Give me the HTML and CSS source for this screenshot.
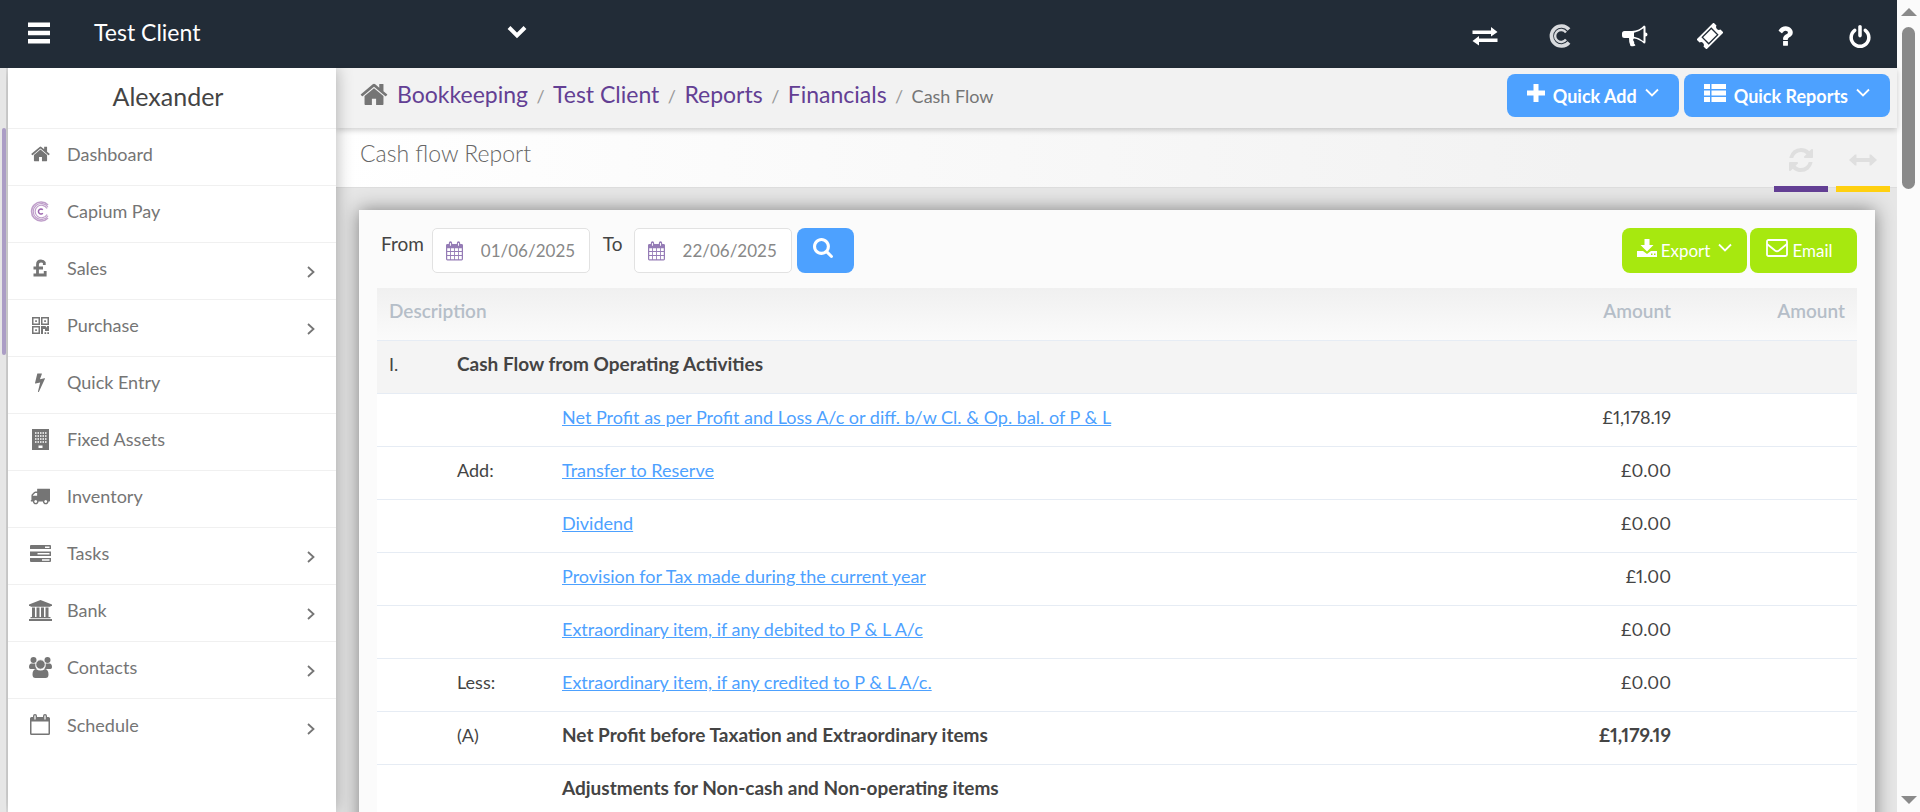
FILE: index.html
```
<!DOCTYPE html>
<html lang="en">
<head>
<meta charset="utf-8">
<title>Cash flow Report</title>
<link rel="stylesheet" href="styles.css">
</head>
<body>
<svg class="defs" aria-hidden="true">
  <symbol id="home" viewBox="64 200 1664 1400"><path d="M1472 992v480q0 26-19 45t-45 19h-384v-384h-256v384h-384q-26 0-45-19t-19-45v-480q0-1 .5-3t.5-3l575-474 575 474q1 2 1 6zm223-69l-62 74q-8 9-21 11h-3q-13 0-21-7l-692-577-692 577q-12 8-24 7-13-2-21-11l-62-74q-8-10-7-23.5t11-21.5l719-599q32-26 76-26t76 26l244 204v-195q0-14 9-23t23-9h192q14 0 23 9t9 23v408l219 182q10 8 11 21.5t-7 23.5z"/></symbol>
  <symbol id="right" viewBox="0 0 8 12"><path d="M1 1l5.500 5L1 11" fill="none" stroke="currentColor" stroke-width="1.800"/></symbol>
  <symbol id="down" viewBox="0 0 14 9"><path d="M1 1.500l6 6 6-6" fill="none" stroke="currentColor" stroke-width="1.800"/></symbol>
  <symbol id="calendar" viewBox="0 0 18 20"><path fill-rule="evenodd" d="M1.500 2.500H3V1.500a1.500 1.500 0 0 1 3.500 0v1h5v-1a1.500 1.500 0 0 1 3.500 0v1h1.500A1.500 1.500 0 0 1 18 4v14.500a1.500 1.500 0 0 1-1.500 1.500h-15A1.500 1.500 0 0 1 0 18.500V4a1.500 1.500 0 0 1 1.500-1.500zM4.200 1.500v3h1v-3zM12.700 1.500v3h1v-3zM1.300 7v3h3V7zM5.200 7v3h3.300V7zM9.400 7v3h3.300V7zM13.600 7v3h3.100V7zM1.300 11v3.200h3V11zM5.200 11v3.200h3.300V11zM9.400 11v3.200h3.300V11zM13.600 11v3.200h3.100V11zM1.300 15.200v3.500h3v-3.500zM5.200 15.200v3.500h3.300v-3.500zM9.400 15.200v3.500h3.300v-3.500zM13.600 15.200v3.500h3.100v-3.500z"/></symbol>
</svg>
<div class="app">
  <div class="page">
    <header class="topbar">
      <button class="plain menu" aria-label="Menu"><svg width="20" height="20" viewBox="0 0 20 20"><path d="M0 .500h20v4H0zM0 8h20v4H0zM0 15.500h20v4H0z"/></svg></button>
      <button class="plain client"><span>Test Client</span><svg width="20" height="14" viewBox="0 0 20 14"><path d="M2 2.500l8 8 8-8" fill="none" stroke="currentColor" stroke-width="4"/></svg></button>
      <nav class="tools" aria-label="Tools">
        <a href="#" aria-label="Switch"><svg width="26" height="20" viewBox="0 0 26 20"><path d="M.500 4.500H19V1l6.500 5-6.500 4.500V8H.500zM25.500 12.500H7V10L.500 15 7 19.500v-3.500h18.500z"/></svg></a>
        <a href="#" aria-label="Capium"><svg width="22" height="24" viewBox="0 0 22 24"><g fill="none" stroke="#d8dadd"><path d="M20 5.500A10 10 0 1 0 20 18.500" stroke-width="3.600"/><path d="M17 8.500A6 6 0 1 0 17 15.500" stroke-width="2.400"/></g></svg></a>
        <a href="#" aria-label="News"><svg width="26" height="22" viewBox="0 0 26 22"><path fill-rule="evenodd" d="M2.500 6H10C15 6 19 3.500 22 .500q1.500 0 1.500 1.500v5.500a2 2 0 0 1 0 4V17q0 1.500-1.500 1.500-4.500-4.200-10-5-1.800 1 .200 3.500-.800 1.500 1.300 3.300-1.500 1.700-5 .700-1.700-4-1.500-8H2.500Q0 13 0 10.500V8.500Q0 6 2.500 6zM21.500 3.300Q17 7 12 7.700v4q5 .600 9.500 4.500z"/></svg></a>
        <a href="#" aria-label="Tickets"><svg width="26" height="26" viewBox="0 0 26 26"><g transform="rotate(-45 13 13)"><path fill-rule="evenodd" d="M1 6h24v4.200a2.900 2.900 0 0 0 0 5.600V20H1v-4.200a2.900 2.900 0 0 0 0-5.600zM6 7.800h14v10.400H6z"/><path d="M7.300 9.100h11.400v7.800H7.300z"/></g></svg></a>
        <a href="#" aria-label="Help"><svg width="16" height="20" viewBox="370 240 1050 1310"><path d="M1088 1256v240q0 16-12 28t-28 12h-240q-16 0-28-12t-12-28v-240q0-16 12-28t28-12h240q16 0 28 12t12 28zm316-600q0 54-15.500 101t-35 76.500-55 59.500-57.500 43.500-61 35.500q-41 23-68.500 65t-27.500 67q0 17-12 32.500t-28 15.500h-240q-15 0-25.500-18.500t-10.500-37.500v-45q0-83 65-156.500t143-108.500q59-27 84-56t25-76q0-42-46.500-74t-107.500-32q-65 0-108 29-35 25-107 115-13 16-31 16-12 0-25-8l-164-125q-13-10-15.500-25t5.500-28q160-266 464-266 80 0 161 31t146 83 106 127.500 41 158.500z"/></svg></a>
        <a href="#" aria-label="Log out"><svg width="22" height="23" viewBox="128 0 1536 1664"><path d="M1664 896q0 156-61 298t-164 245-245 164-298 61-298-61-245-164-164-245-61-298q0-182 80.500-343t226.500-270q43-32 95.500-25t83.500 50q32 42 24.500 94.500t-49.500 84.500q-98 74-151.500 181t-53.500 228q0 104 40.500 198.500t109.500 163.500 163.500 109.500 198.500 40.500 198.500-40.500 163.500-109.500 109.500-163.500 40.500-198.500q0-121-53.500-228t-151.500-181q-42-32-49.500-84.500t24.500-94.500q31-43 84-50t95 25q146 109 226.500 270t80.500 343zm-640-768v640q0 52-38 90t-90 38-90-38-38-90v-640q0-52 38-90t90-38 90 38 38 90z"/></svg></a>
      </nav>
    </header>
    <div class="body">
      <div class="rail"><div class="rail-thumb"></div></div>
      <aside class="sidebar">
        <h2 class="user">Alexander</h2>
        <nav aria-label="Main">
          <a class="item" href="#"><svg width="19" height="16"><use href="#home"/></svg><span>Dashboard</span></a>
          <a class="item" href="#"><svg width="21" height="21" viewBox="0 0 21 21"><g fill="none" stroke="#bf9fca"><path d="M18 4A9.500 9.500 0 1 0 18 17" stroke-width="1.600"/><path d="M18 6.200A8 8 0 1 0 18 14.800" stroke-width="1.200"/><path d="M17 7.500A6.300 6.300 0 1 0 17 13.500" stroke-width="1.200"/><path d="M12.800 8.800a2.500 2.500 0 1 0 0 3.400" stroke="#9a62ad" stroke-width="1.500"/></g></svg><span>Capium Pay</span></a>
          <a class="item" href="#"><svg width="14" height="18" viewBox="0 0 14 18"><path d="M11.300 6V3.700Q10.500 2 8 2 4.500 2 4.500 5.500V15M.500 9h9.500M.500 16h11.700v-4" fill="none" stroke="currentColor" stroke-width="2.800"/></svg><span>Sales</span><svg class="more" width="8" height="12"><use href="#right"/></svg></a>
          <a class="item" href="#"><svg width="17" height="17" viewBox="0 0 17 17"><path fill-rule="evenodd" d="M0 0h8v8H0zM1.500 1.500v5h5v-5zM3.200 3.200h1.700v1.700H3.200zM9 0h8v8H9zM10.500 1.500v5h5v-5zM12.200 3.200h1.700v1.700h-1.700zM0 9h8v8H0zM1.500 10.500v5h5v-5zM3.200 12.200h1.700v1.700H3.200zM9 9h4.500l1.500 1.700V9h2v5h-4v-2h-2v5H9zM12.500 15.300h1.700V17h-1.700zM15.300 15.300H17V17h-1.700z"/></svg><span>Purchase</span><svg class="more" width="8" height="12"><use href="#right"/></svg></a>
          <a class="item" href="#"><svg width="12" height="20" viewBox="448 0 896 1792"><path d="M1333 566q18 20 7 44l-540 1157q-13 25-42 25-4 0-14-2-17-5-25.500-19t-4.500-30l197-808-406 101q-4 1-12 1-18 0-31-11-18-15-13-39l201-825q4-14 16-23t28-9h328q19 0 32 12.500t13 29.500q0 8-5 18l-171 463 396-98q8-2 12-2 19 0 34 15z"/></svg><span>Quick Entry</span></a>
          <a class="item" href="#"><svg width="17" height="21" viewBox="0 0 17 21"><path d="M0 0h17v21H0z"/><path d="M3 4h11.500M3 7h11.500M3 10h11.500M3 13h11.500" stroke="#fff" stroke-width="1.500" stroke-dasharray="1.500 1"/><path d="M6.500 16.500h4V19h-4z" fill="#fff"/></svg><span>Fixed Assets</span></a>
          <a class="item" href="#"><svg width="20" height="17" viewBox="0 256 1792 1408"><path d="M640 1408q0-52-38-90t-90-38-90 38-38 90 38 90 90 38 90-38 38-90zm-384-512h384v-256h-158q-13 0-22 9l-195 195q-9 9-9 22v30zm1280 512q0-52-38-90t-90-38-90 38-38 90 38 90 90 38 90-38 38-90zm256-1088v1024q0 15-4 26.500t-13.500 18.500-16.500 11.500-23.500 6-22.500 2-25.500 0-22.500-.500q0 106-75 181t-181 75-181-75-75-181h-384q0 106-75 181t-181 75-181-75-75-181h-64q-3 0-22.500.500t-25.500 0-22.500-2-23.500-6-16.500-11.500-13.500-18.500-4-26.500q0-26 19-45t45-19v-320q0-8-.500-35t0-38 2.500-34.500 6.500-37 14-30.500 22.500-30l198-198q19-19 50.500-32t58.500-13h160v-192q0-26 19-45t45-19h1024q26 0 45 19t19 45z"/></svg><span>Inventory</span></a>
          <a class="item" href="#"><svg width="21" height="17" viewBox="0 0 21 17"><path fill-rule="evenodd" d="M1 0h19q1 0 1 1v3H0V1q0-1 1-1zM15 1.500V3h4.500V1.500zM0 6.500h21V11H0zM7.500 8v1.500h12V8zM0 13h21v3q0 1-1 1H1q-1 0-1-1zM12 14.300v1.500h7.500v-1.500z"/></svg><span>Tasks</span><svg class="more" width="8" height="12"><use href="#right"/></svg></a>
          <a class="item" href="#"><svg width="23" height="21" viewBox="0 0 23 21"><path d="M11.500 0L23 4.500V6h-1.500v.800h-20V6H0V4.500zM3 7.500h3V17h1.500V7.500h3V17H12V7.500h3V17h1.500V7.500h3V17h2v1.200H1.500V17H3zM0 19h23v2H0z"/></svg><span>Bank</span><svg class="more" width="8" height="12"><use href="#right"/></svg></a>
          <a class="item" href="#"><svg width="23" height="21" viewBox="0 0 23 21"><circle cx="4.500" cy="3" r="3"/><circle cx="18.500" cy="3" r="3"/><path d="M2 6.500h4.500q-.500 3.500 1.200 5.500H1.500Q0 12 0 10.300 0 7 2 6.500zM21 6.500h-4.500q.500 3.500-1.200 5.500h6.200q1.500 0 1.500-1.700 0-3.300-2-3.800z"/><path d="M7 12q4.500 3 9 0 3.500.500 3.500 5.500 0 3.500-3 3.500h-10q-3 0-3-3.500Q3.500 12.500 7 12z"/><circle cx="11.500" cy="7.500" r="4.700" stroke="#fff" stroke-width=".800"/></svg><span>Contacts</span><svg class="more" width="8" height="12"><use href="#right"/></svg></a>
          <a class="item" href="#"><svg width="20" height="21" viewBox="0 0 20 21"><path fill-rule="evenodd" d="M1.500 3H3V2a2 2 0 0 1 4 0v1h6V2a2 2 0 0 1 4 0v1h1.500Q20 3 20 4.500v15q0 1.500-1.500 1.500h-17Q0 21 0 19.500v-15Q0 3 1.500 3zM4.400 1.500v4h1.200v-4zM14.400 1.500v4h1.200v-4zM1.500 7.500v12h17v-12z"/></svg><span>Schedule</span><svg class="more" width="8" height="12"><use href="#right"/></svg></a>
        </nav>
      </aside>
      <main class="main">
        <div class="crumbbar">
          <nav class="crumbs" aria-label="Breadcrumb">
            <svg width="28" height="23"><use href="#home"/></svg>
            <a href="#">Bookkeeping</a><i>/</i><a href="#">Test Client</a><i>/</i><a href="#">Reports</a><i>/</i><a href="#">Financials</a><i>/</i><span>Cash Flow</span>
          </nav>
          <div class="quick">
            <button class="btn blue"><svg width="18" height="18" viewBox="0 0 18 18"><path d="M6.500 0h5v6.500H18v5h-6.500V18h-5v-6.500H0v-5h6.500z"/></svg><span>Quick Add</span><svg width="14" height="9"><use href="#down"/></svg></button>
            <button class="btn blue"><svg width="22" height="18" viewBox="0 0 22 18"><path d="M0 0h6v5H0zM7.500 0H22v5H7.500zM0 6.500h6v5H0zM7.500 6.500H22v5H7.500zM0 13h6v5H0zM7.500 13H22v5H7.500z"/></svg><span>Quick Reports</span><svg width="14" height="9"><use href="#down"/></svg></button>
          </div>
        </div>
        <div class="titlebar">
          <h1>Cash flow Report</h1>
          <div class="actions">
            <button class="plain refresh" aria-label="Refresh"><svg width="24" height="24" viewBox="128 128 1536 1536"><path d="M1639 1056q0 5-1 7-64 268-268 434.500t-478 166.500q-146 0-282.500-55t-243.500-157l-129 129q-19 19-45 19t-45-19-19-45v-448q0-26 19-45t45-19h448q26 0 45 19t19 45-19 45l-137 137q71 66 161 102t187 36q134 0 250-65t186-179q11-17 53-117 8-23 30-23h192q13 0 22.500 9.500t9.500 22.500zm25-800v448q0 26-19 45t-45 19h-448q-26 0-45-19t-19-45 19-45l138-138q-148-137-349-137-134 0-250 65t-186 179q-11 17-53 117-8 23-30 23h-199q-13 0-22.500-9.500t-9.500-22.500v-7q65-268 270-434.500t480-166.500q146 0 284 55.500t245 156.500l130-129q19-19 45-19t45 19 19 45z"/></svg></button>
            <button class="plain expand" aria-label="Expand"><svg width="28" height="12" viewBox="0 0 28 12"><path d="M0 6l6-5.500h1.500V4h13V.500H22L28 6l-6 5.500h-1.500V8h-13v3.500H6z"/></svg></button>
          </div>
        </div>
        <section class="card">
          <form class="filters">
            <label for="from">From</label>
            <div class="date"><svg width="17" height="20"><use href="#calendar"/></svg><input id="from" type="text" value="01/06/2025"></div>
            <label for="to" class="to">To</label>
            <div class="date"><svg width="17" height="20"><use href="#calendar"/></svg><input id="to" type="text" value="22/06/2025"></div>
            <button type="button" class="btn blue search" aria-label="Search"><svg width="20" height="20" viewBox="64 128 1664 1664"><path d="M1216 832q0-185-131.500-316.500t-316.500-131.500-316.500 131.500-131.500 316.500 131.500 316.500 316.500 131.500 316.500-131.500 131.500-316.500zm512 832q0 52-38 90t-90 38q-54 0-90-38l-343-342q-179 124-399 124-143 0-273.500-55.500t-225-150-150-225-55.500-273.500 55.500-273.500 150-225 225-150 273.500-55.500 273.500 55.500 225 150 150 225 55.500 273.500q0 220-124 399l343 343q37 37 37 90z"/></svg></button>
            <button type="button" class="btn green export"><svg width="20" height="18" viewBox="0 0 20 18"><path fill-rule="evenodd" d="M7.500 0h5v6h4L10 12.500 3.500 6h4zM0 12h6l4 3 4-3h6v6H0zM14 14.500V16h1.500v-1.500zM17 14.500V16h1.500v-1.500z"/></svg><span>Export</span><svg class="caret" width="14" height="9"><use href="#down"/></svg></button>
            <button type="button" class="btn green email"><svg width="22" height="18" viewBox="0 0 22 18"><g fill="none" stroke="currentColor" stroke-width="1.800"><rect x="1" y="1" width="20" height="16" rx="1.500"/><path d="M1 5l8 6.500q2 1.500 4 0L21 5"/></g></svg><span>Email</span></button>
          </form>
          <table class="report">
            <colgroup><col class="c1"><col class="c2"><col><col class="c4"><col class="c5"></colgroup>
            <thead><tr><th colspan="3">Description</th><th class="num">Amount</th><th class="num">Amount</th></tr></thead>
            <tbody>
              <tr class="group"><td>I.</td><td colspan="2"><b>Cash Flow from Operating Activities</b></td><td></td><td></td></tr>
              <tr><td></td><td></td><td><a href="#">Net Profit as per Profit and Loss A/c or diff. b/w Cl. &amp; Op. bal. of P &amp; L</a></td><td class="num">£1,178.19</td><td></td></tr>
              <tr><td></td><td>Add:</td><td><a href="#">Transfer to Reserve</a></td><td class="num">£0.00</td><td></td></tr>
              <tr><td></td><td></td><td><a href="#">Dividend</a></td><td class="num">£0.00</td><td></td></tr>
              <tr><td></td><td></td><td><a href="#">Provision for Tax made during the current year</a></td><td class="num">£1.00</td><td></td></tr>
              <tr><td></td><td></td><td><a href="#">Extraordinary item, if any debited to P &amp; L A/c</a></td><td class="num">£0.00</td><td></td></tr>
              <tr><td></td><td>Less:</td><td><a href="#">Extraordinary item, if any credited to P &amp; L A/c.</a></td><td class="num">£0.00</td><td></td></tr>
              <tr><td></td><td>(A)</td><td><b>Net Profit before Taxation and Extraordinary items</b></td><td class="num"><b>£1,179.19</b></td><td></td></tr>
              <tr><td></td><td></td><td><b>Adjustments for Non-cash and Non-operating items</b></td><td></td><td></td></tr>
            </tbody>
          </table>
        </section>
      </main>
    </div>
  </div>
  <div class="scroll" aria-hidden="true">
    <svg width="16" height="8" viewBox="0 0 16 8"><path d="M8 0l8 8H0z"/></svg>
    <div class="thumb"></div>
    <svg class="end" width="16" height="8" viewBox="0 0 16 8"><path d="M8 8l8-8H0z"/></svg>
  </div>
</div>
</body>
</html>
```

FILE: styles.css
```
* { box-sizing: border-box; }
body { margin: 0; font: 18px/24px Lato, "Open Sans", sans-serif; color: #444; background: #e6e6e6; }
svg { fill: currentColor; flex: none; }
a { color: inherit; text-decoration: none; }
button, input { font: inherit; color: inherit; }
.defs { position: absolute; width: 0; height: 0; }
.plain { border: 0; background: none; padding: 0; cursor: pointer; }

.app { display: flex; height: 100vh; overflow: hidden; }
.page { flex: 1; min-width: 0; display: flex; flex-direction: column; }

.topbar { display: flex; align-items: center; height: 68px; flex: none; background: #222c37; color: #fff; }
.menu { display: flex; padding: 0 0 2px 27px; }
.menu svg { width: 24px; height: 22px; }
.client { display: flex; align-items: center; justify-content: space-between; width: 433px; margin-left: 43px; padding-bottom: 4px; font-size: 23px; line-height: 28px; }
.tools { display: flex; margin-left: auto; padding-top: 4px; }
.tools a { width: 75px; height: 26px; display: flex; align-items: center; justify-content: center; }

.body { flex: 1; min-height: 0; display: flex; }
.rail { width: 8px; flex: none; padding: 60px 2px 0; }
.rail-thumb { height: 227px; border-radius: 2px; background: #ab9dc5; }
.sidebar { width: 328px; flex: none; background: #fff; box-shadow: 0 0 16px rgba(0,0,0,.3); z-index: 1; clip-path: inset(0 -20px 0 -2px); }
.user { margin: 0; height: 61px; padding-right: 8px; border-bottom: 1px solid #f0f0f0; font-size: 25px; font-weight: 400; line-height: 56px; text-align: center; }
.item { display: grid; grid-template-columns: 24px 1fr 8px; column-gap: 15px; align-items: center; height: 57px; padding: 0 21px 6px 20px; border-bottom: 1px solid #f0f0f0; color: #757575; }
.item:last-child { border-bottom: 0; }
.item > svg:first-child { margin: 0 auto; }
.item .more { margin-top: 8px; }

.main { flex: 1; min-width: 0; }
.crumbbar { display: flex; justify-content: space-between; height: 60px; padding: 6px 7px 0 24px; background: #f2f2f2; box-shadow: 0 2px 6px rgba(0,0,0,.2); position: relative; }
.crumbs { display: flex; align-items: baseline; color: #757575; font-size: 23px; line-height: 40px; }
.crumbs svg { align-self: flex-start; margin: 9px 9px 0 0; }
.crumbs a { color: #633f94; }
.crumbs i { width: 25px; text-align: center; font-size: 18px; font-style: normal; color: #999; }
.crumbs span { font-size: 18px; }
.quick { display: flex; gap: 5px; }
.btn { display: flex; align-items: center; justify-content: center; border: 0; border-radius: 8px; color: #fff; white-space: nowrap; cursor: pointer; }
.btn svg { margin-bottom: 6px; }
.blue { background: #4da1ff; }
.green { background: #a7e80f; }
.quick .btn { height: 43px; padding: 0 20px; gap: 8px; font-size: 18px; font-weight: 700; }

.titlebar { display: flex; justify-content: space-between; height: 60px; padding: 0 7px 0 24px; background: linear-gradient(90deg, #fff, #f2f2f2 80%); border-bottom: 1px solid #ddd; }
h1 { margin: 0; font-size: 23px; font-weight: 300; line-height: 50px; color: #666; }
.actions { display: flex; gap: 8px; height: 64px; }
.actions button { width: 54px; display: flex; align-items: center; justify-content: center; color: #dfdfdf; border-bottom: 6px solid #633f94; padding-top: 6px; z-index: 1; }
.actions .expand { border-color: #ffd010; }

.card { margin: 22px 22px 0 23px; padding: 18px; min-height: 700px; background: #fbfbfb; box-shadow: 0 0 18px rgba(0,0,0,.45); }
.filters { display: flex; height: 45px; margin-bottom: 15px; }
.filters label { padding: 4px 8px 0 4px; font-size: 19px; }
.filters .to { padding: 4px 11px 0 13px; }
.date { display: flex; align-items: center; width: 158px; border: 1px solid #e2e2e2; border-radius: 5px; background: #fff; padding-left: 13px; color: #957cb6; }
.date input { min-width: 0; width: 100%; border: 0; outline: 0; background: none; padding: 0 0 0 18px; font-size: 17px; color: #888; }
.search { width: 57px; margin-left: 5px; padding-right: 10px; }
.filters .export { margin-left: auto; width: 125px; gap: 4px; }
.export .caret { margin-left: 4px; }
.filters .email { width: 107px; gap: 4px; margin-left: 3px; padding-right: 14px; }
.filters .green { font-size: 17px; }

.report { width: 100%; border-collapse: separate; border-spacing: 0; table-layout: fixed; background: #fff; font-variant-numeric: proportional-nums; }
.c1 { width: 68px; }
.c2 { width: 105px; }
.c4 { width: 174px; }
.c5 { width: 174px; }
.report th, .report td { height: 53px; padding: 0 12px 6px; text-align: left; border-bottom: 1px solid #e6ecf4; }
.report th { font-size: 19px; font-weight: 600; color: #b5bec8; }
.report b { font-size: 19px; }
.report thead { background: linear-gradient(#f0f0f0, #fbfbfb); }
.report .num { text-align: right; }
.group { background: #f4f4f4; }
.report a { color: #4da1ff; text-decoration: underline; }

.scroll { width: 23px; flex: none; display: flex; flex-direction: column; align-items: center; padding: 8px 0; background: #fbfbfb; color: #8a8a8a; }
.thumb { width: 13px; height: 162px; margin-top: 11px; border-radius: 7px; background: #8a8a8a; }
.scroll .end { margin-top: auto; }
```
